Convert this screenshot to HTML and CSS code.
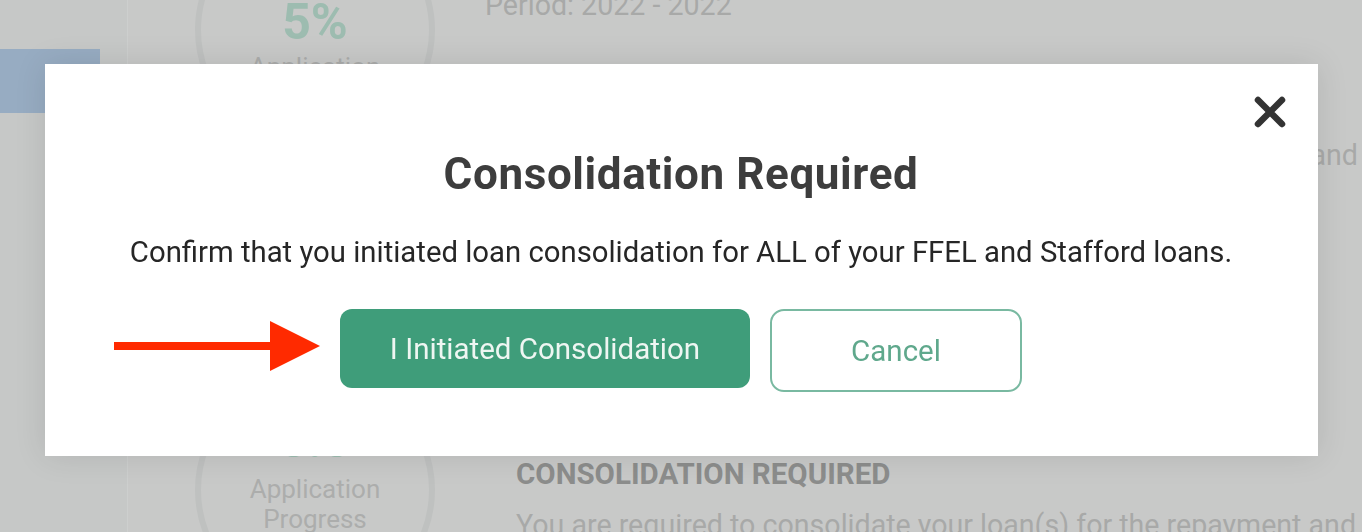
FILE: index.html
```html
<!DOCTYPE html>
<html lang="en">
<head>
    <meta charset="UTF-8">
    <meta name="viewport" content="width=device-width, initial-scale=1.0">
    <title>Consolidation Required</title>
    <link rel="stylesheet" href="styles.css">
</head>
<body>
    <!-- Page behind the dialog (dimmed) -->
    <div class="page">
        <aside class="sidebar">
            <div class="side-item active"></div>
        </aside>

        <section class="progress-col">
            <div class="ring ring-top">
                <span class="pct">5%</span>
                <span class="ring-label">Application</span>
            </div>
            <div class="ring ring-bottom">
                <span class="pct">0.0</span>
                <span class="ring-label">Application<br>Progress</span>
            </div>
        </section>

        <main class="details">
            <p class="period">Period: 2022 - 2022</p>
            <p class="summary">Your loans may qualify for the limited waiver program, review and</p>
            <div class="notice">
                <h2>CONSOLIDATION REQUIRED</h2>
                <p>You are required to consolidate your loan(s) for the repayment and forgiveness</p>
            </div>
        </main>
    </div>

    <!-- Dialog -->
    <div class="overlay">
        <div class="modal" role="dialog">
            <button class="modal-close" aria-label="Close">
                <svg width="34" height="34" viewBox="0 0 34 34">
                    <path d="M5 5 L29 29 M29 5 L5 29" stroke="#333" stroke-width="6.5" stroke-linecap="round" fill="none"/>
                </svg>
            </button>
            <h1 class="modal-title">Consolidation Required</h1>
            <p class="modal-text">Confirm that you initiated loan consolidation for ALL of your FFEL and Stafford loans.</p>
            <div class="modal-actions">
                <button class="btn btn-primary">I Initiated Consolidation</button>
                <button class="btn btn-outline">Cancel</button>
            </div>
        </div>
    </div>

    <!-- Annotation arrow -->
    <svg class="arrow" width="206" height="52" viewBox="0 0 206 52">
        <rect x="0" y="22" width="160" height="8" fill="#ff2a00"/>
        <polygon points="156,1 206,26 156,51" fill="#ff2a00"/>
    </svg>
</body>
</html>
```

FILE: styles.css
```css
body {
    margin: 0;
    height: 100vh;
    overflow: hidden;
    background-color: #c8c9c8;
    font-family: Roboto, 'Liberation Sans', sans-serif;
}

.page {
    display: flex;
    height: 100%;
    overflow: hidden;
}

.sidebar {
    width: 128px;
    flex-shrink: 0;
    padding-top: 49px;
    background-color: #c6c8c7;
    border-right: 1px solid #cdcfce;
    box-sizing: border-box;
}

.side-item {
    height: 64px;
    width: 100px;
}

.side-item.active {
    background-color: #97acc2;
}

.progress-col {
    width: 357px;
    flex-shrink: 0;
    box-sizing: border-box;
    padding-left: 17px;
    display: flex;
    flex-direction: column;
    align-items: center;
    gap: 220px;
    margin-top: -90px;
}

.ring {
    width: 228px;
    height: 228px;
    border: 6px solid #bfc1c0;
    border-radius: 50%;
    display: flex;
    flex-direction: column;
    align-items: center;
    box-sizing: content-box;
    flex-shrink: 0;
}

.pct {
    font-size: 50px;
    font-weight: 700;
    color: #9dbcb0;
    line-height: 56px;
}

.ring-top .pct {
    margin-top: 78px;
}

.ring-bottom .pct {
    margin-top: 36px;
}

.ring-label {
    font-size: 26px;
    line-height: 30px;
    color: #acadac;
    text-align: center;
}

.ring-top .ring-label {
    margin-top: 2px;
}

.ring-bottom .ring-label {
    margin-top: 6px;
}

.details {
    flex-grow: 1;
    margin-top: -13px;
    color: #a8a9a8;
    white-space: nowrap;
    overflow: hidden;
}

.details p {
    margin: 0;
    font-size: 28.6px;
    line-height: 36px;
}

.summary {
    margin-top: 114px !important;
    text-align: right;
    padding-right: 4px;
}

.notice {
    padding-left: 31px;
    margin-top: 284px;
}

.notice h2 {
    margin: 0 0 16px;
    font-size: 29.5px;
    line-height: 34px;
    font-weight: 700;
    color: #8c8d8c;
}

.overlay {
    position: fixed;
    inset: 0;
    display: flex;
    justify-content: center;
    align-items: flex-start;
    padding-top: 64px;
}

.modal {
    position: relative;
    width: 1273px;
    height: 392px;
    box-sizing: border-box;
    background-color: #fff;
    box-shadow: 0 0 30px rgba(0, 0, 0, 0.1);
    display: flex;
    flex-direction: column;
    align-items: center;
    padding-top: 84px;
    color: #3d3d3d;
}

.modal-close {
    position: absolute;
    top: 31px;
    right: 31px;
    border: 0;
    padding: 0;
    background: none;
    display: flex;
}

.modal-title {
    margin: 0;
    font-size: 44px;
    line-height: 52px;
    font-weight: 700;
    letter-spacing: 0.6px;
}

.modal-text {
    margin: 34px 0 0;
    font-size: 29.3px;
    line-height: 36px;
    color: #262626;
}

.modal-actions {
    display: flex;
    align-items: flex-start;
    gap: 20px;
    margin-top: 39px;
}

.btn {
    font-family: Roboto, 'Liberation Sans', sans-serif;
    font-size: 29.5px;
    border-radius: 12px;
    box-sizing: border-box;
    cursor: pointer;
}

.btn-primary {
    width: 410px;
    height: 79px;
    border: 0;
    background-color: #3f9d7a;
    color: #eef6f2;
}

.btn-outline {
    width: 252px;
    height: 83px;
    border: 2px solid #79b9a1;
    border-radius: 14px;
    background-color: #fff;
    color: #5fa88c;
}

.arrow {
    position: absolute;
    left: 114px;
    top: 320px;
}
```
